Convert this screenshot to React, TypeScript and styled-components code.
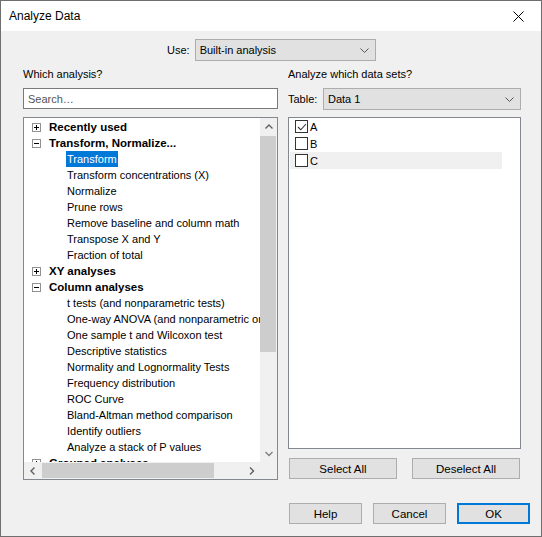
import styled, { createGlobalStyle, css } from "styled-components";

const GlobalStyle = createGlobalStyle`
  body {
    margin: 0;
    font-family: "Liberation Sans", Arial, sans-serif;
    font-size: 11px;
    color: #000;
  }
  * {
    box-sizing: border-box;
  }
`;

const StyledWindow = styled.div`
  width: 542px;
  height: 537px;
  border: 1px solid #6f6f6f;
  background: #f0f0f0;
  display: flex;
  flex-direction: column;
`;
const StyledTitleBar = styled.div`
  height: 30px;
  background: #fff;
  display: flex;
  align-items: center;
  justify-content: space-between;
  padding-left: 8px;
  font-size: 12px;
`;
const StyledClose = styled.div`
  width: 46px;
  height: 30px;
  display: flex;
  align-items: center;
  justify-content: center;
`;
const StyledBody = styled.div`
  flex: 1;
  display: flex;
  flex-direction: column;
  padding: 8px 11px 0 22px;
`;
const StyledUseRow = styled.div`
  display: flex;
  align-items: center;
  gap: 5px;
  padding-left: 144px;
`;
const StyledSelect = styled.div<{ $width: number }>`
  width: ${(p) => p.$width}px;
  height: 22px;
  border: 1px solid #adadad;
  background: #e1e1e1;
  display: flex;
  align-items: center;
  justify-content: space-between;
  padding: 0 6px 0 4px;
`;
const StyledColumns = styled.div`
  display: grid;
  grid-template-columns: 255px 233px;
  column-gap: 10px;
  margin-top: 5px;
`;
const StyledColumn = styled.div`
  display: flex;
  flex-direction: column;
`;
const StyledLabel = styled.div`
  height: 16px;
  line-height: 16px;
  margin-bottom: 6px;
`;
const StyledSearch = styled.input`
  height: 21px;
  border: 1px solid #7a7a7a;
  background: #fff;
  padding: 0 4px;
  font-family: inherit;
  font-size: 11px;
  outline: none;
  &::placeholder {
    color: #555;
  }
`;
const StyledTree = styled.div`
  margin-top: 8px;
  height: 363px;
  border: 1px solid #828790;
  background: #fff;
  display: grid;
  grid-template-columns: 1fr 17px;
  grid-template-rows: 1fr 17px;
`;
const StyledTreeContent = styled.div`
  overflow: hidden;
  padding-top: 1px;
  white-space: nowrap;
`;
const StyledTreeRow = styled.div<{ $group?: boolean }>`
  height: 16px;
  display: flex;
  align-items: center;
  ${(p) =>
    p.$group
      ? css`
          padding-left: 8px;
          gap: 8px;
          font-weight: bold;
          font-size: 11.5px;
        `
      : css`
          padding-left: 42px;
        `}
`;
const StyledItemText = styled.span<{ $selected?: boolean }>`
  height: 16px;
  line-height: 16px;
  padding: 0 1px;
  ${(p) =>
    p.$selected &&
    css`
      background: #0078d7;
      color: #fff;
    `}
`;
const StyledExpander = styled.div`
  width: 9px;
  height: 9px;
  border: 1px solid #919191;
  position: relative;
  flex-shrink: 0;
`;
const StyledVScroll = styled.div`
  background: #f0f0f0;
  display: flex;
  flex-direction: column;
`;
const StyledHScroll = styled.div`
  background: #f0f0f0;
  display: flex;
`;
const StyledArrow = styled.div`
  width: 17px;
  height: 17px;
  display: flex;
  align-items: center;
  justify-content: center;
  flex-shrink: 0;
`;
const StyledTrack = styled.div<{ $horizontal?: boolean }>`
  flex: 1;
  display: flex;
  flex-direction: ${(p) => (p.$horizontal ? "row" : "column")};
  padding: ${(p) => (p.$horizontal ? "1px 0" : "0 1px 0 0")};
`;
const StyledThumb = styled.div<{ $horizontal?: boolean }>`
  background: #cdcdcd;
  ${(p) =>
    p.$horizontal
      ? css`
          margin-left: 1px;
          width: 172px;
          height: 100%;
        `
      : css`
          margin-top: 1px;
          height: 216px;
          width: 100%;
        `}
`;
const StyledCorner = styled.div`
  background: #f0f0f0;
`;
const StyledTableRow = styled.div`
  display: flex;
  align-items: center;
  justify-content: space-between;
`;
const StyledCheckList = styled.div`
  margin-top: 7px;
  height: 332px;
  border: 1px solid #828790;
  background: #fff;
`;
const StyledCheckRow = styled.div<{ $hover?: boolean }>`
  height: 17px;
  width: 212px;
  margin-left: 1px;
  display: flex;
  align-items: center;
  gap: 2px;
  padding-left: 5px;
  background: ${(p) => (p.$hover ? "#f0f0f0" : "transparent")};
`;
const StyledCheckbox = styled.div`
  width: 13px;
  height: 13px;
  border: 1px solid #333;
  background: #fff;
  display: flex;
  align-items: center;
  justify-content: center;
`;
const StyledButtonRow = styled.div`
  margin-top: 9px;
  display: flex;
  justify-content: space-between;
  padding: 0 1px;
`;
const StyledButton = styled.button<{ $width: number; $default?: boolean }>`
  width: ${(p) => p.$width}px;
  height: 21px;
  background: #e1e1e1;
  border: ${(p) => (p.$default ? "2px solid #0078d7" : "1px solid #adadad")};
  font-family: inherit;
  font-size: 11.5px;
  color: #000;
  padding: 0;
`;
const StyledFooter = styled.div`
  margin-top: 23px;
  display: flex;
  justify-content: flex-end;
  gap: 11px;
`;

const Chevron = ({ dir, color = "#606060" }: { dir: "up" | "down" | "left" | "right"; color?: string }) => {
  const paths = {
    up: "M0.5 4.5 L4 1 L7.5 4.5",
    down: "M0.5 1 L4 4.5 L7.5 1",
    left: "M4.5 0.5 L1 4 L4.5 7.5",
    right: "M1 0.5 L4.5 4 L1 7.5",
  };
  const vertical = dir === "up" || dir === "down";
  return (
    <svg width={vertical ? 8 : 6} height={vertical ? 6 : 8} viewBox={vertical ? "0 0 8 6" : "0 0 6 8"}>
      <path d={paths[dir]} fill="none" stroke={color} strokeWidth="1.4" />
    </svg>
  );
};

const SelectChevron = () => (
  <svg width="9" height="5" viewBox="0 0 9 5">
    <path d="M0.5 0.5 L4.5 4.5 L8.5 0.5" fill="none" stroke="#555" strokeWidth="1" />
  </svg>
);

const Expander = ({ open }: { open: boolean }) => (
  <StyledExpander>
    <svg width="7" height="7" viewBox="0 0 7 7" style={{ position: "absolute", left: 0, top: 0 }}>
      <path d="M1 3.5 H6" stroke="#000" strokeWidth="1" />
      {!open && <path d="M3.5 1 V6" stroke="#000" strokeWidth="1" />}
    </svg>
  </StyledExpander>
);

type Row = { label: string; group?: boolean; open?: boolean; selected?: boolean };

const rows: Row[] = [
  { label: "Recently used", group: true, open: false },
  { label: "Transform, Normalize...", group: true, open: true },
  { label: "Transform", selected: true },
  { label: "Transform concentrations (X)" },
  { label: "Normalize" },
  { label: "Prune rows" },
  { label: "Remove baseline and column math" },
  { label: "Transpose X and Y" },
  { label: "Fraction of total" },
  { label: "XY analyses", group: true, open: false },
  { label: "Column analyses", group: true, open: true },
  { label: "t tests (and nonparametric tests)" },
  { label: "One-way ANOVA (and nonparametric or mixed)" },
  { label: "One sample t and Wilcoxon test" },
  { label: "Descriptive statistics" },
  { label: "Normality and Lognormality Tests" },
  { label: "Frequency distribution" },
  { label: "ROC Curve" },
  { label: "Bland-Altman method comparison" },
  { label: "Identify outliers" },
  { label: "Analyze a stack of P values" },
  { label: "Grouped analyses", group: true, open: false },
];

const dataSets = [
  { name: "A", checked: true },
  { name: "B", checked: false },
  { name: "C", checked: false, hover: true },
];

export default function App() {
  return (
    <>
      <GlobalStyle />
      <StyledWindow>
        <StyledTitleBar>
          <span>Analyze Data</span>
          <StyledClose>
            <svg width="11" height="11" viewBox="0 0 11 11">
              <path d="M0.5 0.5 L10.5 10.5 M10.5 0.5 L0.5 10.5" stroke="#000" strokeWidth="1" />
            </svg>
          </StyledClose>
        </StyledTitleBar>
        <StyledBody>
          <StyledUseRow>
            <span>Use:</span>
            <StyledSelect $width={181}>
              <span>Built-in analysis</span>
              <SelectChevron />
            </StyledSelect>
          </StyledUseRow>
          <StyledColumns>
            <StyledColumn>
              <StyledLabel>Which analysis?</StyledLabel>
              <StyledSearch placeholder="Search…" />
              <StyledTree>
                <StyledTreeContent>
                  {rows.map((row) =>
                    row.group ? (
                      <StyledTreeRow key={row.label} $group>
                        <Expander open={!!row.open} />
                        <span>{row.label}</span>
                      </StyledTreeRow>
                    ) : (
                      <StyledTreeRow key={row.label}>
                        <StyledItemText $selected={row.selected}>{row.label}</StyledItemText>
                      </StyledTreeRow>
                    )
                  )}
                </StyledTreeContent>
                <StyledVScroll>
                  <StyledArrow>
                    <Chevron dir="up" />
                  </StyledArrow>
                  <StyledTrack>
                    <StyledThumb />
                  </StyledTrack>
                  <StyledArrow>
                    <Chevron dir="down" color="#808080" />
                  </StyledArrow>
                </StyledVScroll>
                <StyledHScroll>
                  <StyledArrow>
                    <Chevron dir="left" />
                  </StyledArrow>
                  <StyledTrack $horizontal>
                    <StyledThumb $horizontal />
                  </StyledTrack>
                  <StyledArrow>
                    <Chevron dir="right" />
                  </StyledArrow>
                </StyledHScroll>
                <StyledCorner />
              </StyledTree>
            </StyledColumn>
            <StyledColumn>
              <StyledLabel>Analyze which data sets?</StyledLabel>
              <StyledTableRow>
                <span>Table:</span>
                <StyledSelect $width={198}>
                  <span>Data 1</span>
                  <SelectChevron />
                </StyledSelect>
              </StyledTableRow>
              <StyledCheckList>
                {dataSets.map((d) => (
                  <StyledCheckRow key={d.name} $hover={d.hover}>
                    <StyledCheckbox>
                      {d.checked && (
                        <svg width="10" height="8" viewBox="0 0 10 8">
                          <path d="M1 4 L3.8 6.8 L9 1" fill="none" stroke="#333" strokeWidth="1.1" />
                        </svg>
                      )}
                    </StyledCheckbox>
                    <span>{d.name}</span>
                  </StyledCheckRow>
                ))}
              </StyledCheckList>
              <StyledButtonRow>
                <StyledButton $width={108}>Select All</StyledButton>
                <StyledButton $width={108}>Deselect All</StyledButton>
              </StyledButtonRow>
            </StyledColumn>
          </StyledColumns>
          <StyledFooter>
            <StyledButton $width={73}>Help</StyledButton>
            <StyledButton $width={73}>Cancel</StyledButton>
            <StyledButton $width={73} $default>
              OK
            </StyledButton>
          </StyledFooter>
        </StyledBody>
      </StyledWindow>
    </>
  );
}
